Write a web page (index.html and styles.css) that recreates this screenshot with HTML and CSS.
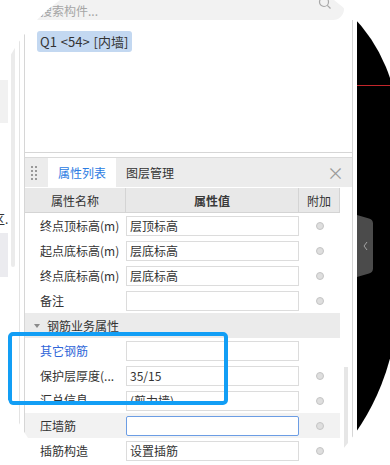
FILE: index.html
```html
<!DOCTYPE html>
<html lang="zh-CN">
<head>
    <meta charset="UTF-8">
    <meta name="viewport" content="width=device-width, initial-scale=1.0">
    <title>属性列表</title>
    <link rel="stylesheet" href="styles.css">
</head>
<body>
    <div class="stage">
        <div class="lens">
            <div class="screen">
                <div class="side">
                    <div class="side-list">
                        <div class="side-sel"></div>
                        <div class="side-text">区.</div>
                        <div class="side-block"></div>
                    </div>
                    <div class="side-scroll"></div>
                </div>

                <div class="main">
                    <div class="search">
                        <span class="search-text">搜索构件...</span>
                        <svg class="search-icon" width="14" height="14" viewBox="0 0 14 14">
                            <circle cx="6" cy="6" r="4.5" fill="none" stroke="#a8a8a8" stroke-width="1.2"/>
                            <line x1="9.3" y1="9.3" x2="12.5" y2="12.5" stroke="#a8a8a8" stroke-width="1.2"/>
                        </svg>
                    </div>

                    <div class="panel">
                        <div class="comp-list">
                            <span class="comp-item">Q1 &lt;54&gt; [内墙]</span>
                        </div>

                        <div class="tabs">
                            <div class="handle">
                                <i></i><i></i><i></i><i></i><i></i><i></i><i></i><i></i>
                            </div>
                            <div class="tab active">属性列表</div>
                            <div class="tab">图层管理</div>
                            <div class="tab-close">×</div>
                        </div>

                        <div class="props">
                            <div class="grid">
                                <div class="row head">
                                    <div class="cell">属性名称</div>
                                    <div class="cell strong">属性值</div>
                                    <div class="cell">附加</div>
                                </div>
                                <div class="row">
                                    <div class="label">终点顶标高(m)</div>
                                    <div class="val">层顶标高</div>
                                    <div class="add"><span class="radio"></span></div>
                                </div>
                                <div class="row">
                                    <div class="label">起点底标高(m)</div>
                                    <div class="val">层底标高</div>
                                    <div class="add"><span class="radio"></span></div>
                                </div>
                                <div class="row">
                                    <div class="label">终点底标高(m)</div>
                                    <div class="val">层底标高</div>
                                    <div class="add"><span class="radio"></span></div>
                                </div>
                                <div class="row">
                                    <div class="label">备注</div>
                                    <div class="val"></div>
                                    <div class="add"><span class="radio"></span></div>
                                </div>
                                <div class="group"><span class="caret"></span>钢筋业务属性</div>
                                <div class="row">
                                    <div class="label link">其它钢筋</div>
                                    <div class="val"></div>
                                    <div class="add"></div>
                                </div>
                                <div class="row">
                                    <div class="label">保护层厚度(...</div>
                                    <div class="val">35/15</div>
                                    <div class="add"><span class="radio"></span></div>
                                </div>
                                <div class="row cut">
                                    <div class="label"><span>汇总信息</span></div>
                                    <div class="val"><span>(剪力墙)</span></div>
                                    <div class="add"><span class="radio"></span></div>
                                </div>
                                <div class="row hover">
                                    <div class="label">压墙筋</div>
                                    <div class="val focus"></div>
                                    <div class="add"><span class="radio"></span></div>
                                </div>
                                <div class="row">
                                    <div class="label">插筋构造</div>
                                    <div class="val">设置插筋</div>
                                    <div class="add"><span class="radio"></span></div>
                                </div>
                                <div class="row">
                                    <div class="label"></div>
                                    <div class="val"></div>
                                    <div class="add"><span class="radio"></span></div>
                                </div>
                            </div>
                            <div class="vscroll"><div class="thumb"></div></div>
                        </div>
                    </div>
                </div>

                <div class="canvas">
                    <div class="red-line top"></div>
                    <svg class="fold" width="16" height="62" viewBox="0 0 16 62">
                        <path d="M0 0 L12 3.5 Q16 4.5 16 8.5 L16 53.5 Q16 57.5 12 58.5 L0 62 Z" fill="#4b4b4b"/>
                        <polyline points="10,27 7,31 10,35" fill="none" stroke="#a3a3a3" stroke-width="1"/>
                    </svg>
                    <div class="red-line bottom"></div>
                </div>

                <div class="mark"></div>
            </div>
        </div>
    </div>
</body>
</html>
```

FILE: styles.css
```css
body {
    margin: 0;
    background-color: #fff;
    font-family: 'Noto Sans CJK SC', 'Noto Sans', sans-serif;
    font-size: 12px;
    color: #333;
}
.stage {
    position: relative;
    width: 390px;
    height: 465px;
    overflow: hidden;
    background-color: #fff;
}
/* the magnifier: outside of it is plain white */
.lens {
    position: absolute;
    left: -12px;
    top: -32px;
    width: 410px;
    height: 559px;
    padding: 32px 0 0 12px;
    box-sizing: border-box;
    overflow: hidden;
    background-color: #fff;
    border-radius: 172px 160px 220px 190px / 172px 160px 230px 230px;
}
.screen {
    position: relative;
    display: flex;
    height: 100%;
}

/* left panel that peeks in */
.side {
    display: flex;
    width: 20px;
    margin-right: 4px;
    box-sizing: border-box;
    border-right: 1px solid #e3e3e3;
}
.side-list {
    display: flex;
    flex-direction: column;
    width: 8px;
    margin-right: 3px;
}
.side-sel {
    margin-top: 80px;
    height: 43px;
    background-color: #f1f1f1;
}
.side-text {
    margin-top: 89px;
    margin-left: -7px;
    height: 14px;
    line-height: 14px;
    white-space: nowrap;
}
.side-block {
    margin-top: 7px;
    height: 44px;
    background-color: #ebebef;
}
.side-scroll {
    margin-top: 43px;
    width: 4px;
    height: 224px;
    border-radius: 2px;
    background-color: #ebebeb;
}

.main {
    display: flex;
    flex-direction: column;
    width: 329px;
}
.search {
    display: flex;
    align-items: center;
    height: 20px;
    margin: 0 9px 0 10px;
    padding-left: 6px;
    background-color: #f2f2f2;
    border-radius: 0 10px 12px 0;
}
.search-text {
    color: #a5a5a5;
    flex: 1;
}
.search-icon {
    margin: -15px 12px 0 0;
}

.panel {
    flex: 1;
    border-left: 1px solid #d6d6d6;
    border-right: 1px solid #d6d6d6;
}
.comp-list {
    height: 133px;
    box-sizing: border-box;
    padding: 11px 12px;
    border-bottom: 1px solid #d6d6d6;
}
.comp-item {
    display: inline-block;
    height: 21px;
    line-height: 21px;
    padding: 0 4px 0 3px;
    border-radius: 3px;
    background-color: #c3d8f1;
    color: #333;
    font-size: 13px;
    word-spacing: 1px;
}

.tabs {
    display: flex;
    align-items: stretch;
    height: 30px;
    margin-top: 4px;
    box-sizing: border-box;
    border-top: 1px solid #dadada;
    background-color: #ececec;
}
.handle {
    display: grid;
    grid-template-columns: 2px 2px;
    grid-auto-rows: 2px;
    gap: 2px;
    align-content: center;
    width: 6px;
    margin-left: 6px;
}
.handle i {
    background-color: #999;
}
.tab {
    display: flex;
    align-items: center;
    padding: 0 10px;
    font-size: 12px;
    color: #333;
}
.tab.active {
    justify-content: center;
    width: 68px;
    padding: 0;
    margin-left: 11px;
    background-color: #fff;
    color: #2b7be2;
}
.tab-close {
    display: flex;
    align-items: center;
    margin-left: auto;
    margin-right: 8px;
    font-size: 17px;
    color: #9a9a9a;
}

.props {
    display: flex;
}
.grid {
    width: 315px;
}
.vscroll {
    flex: 1;
}
.thumb {
    width: 4px;
    height: 83px;
    margin: 180px 0 0 4px;
    background-color: #e6e6e6;
}
.row {
    display: grid;
    grid-template-columns: 101px 173px 41px;
    align-items: center;
    height: 25px;
}
.row.head {
    height: 25px;
    margin-top: 1px;
    box-sizing: border-box;
    border-bottom: 1px solid #d4d4d4;
    align-items: stretch;
}
.head .cell {
    display: flex;
    align-items: center;
    justify-content: center;
    background-color: #e8e8e8;
    border-right: 1px solid #d4d4d4;
    color: #333;
}
.head .strong {
    font-weight: bold;
    color: #3a3a3a;
}
.label {
    padding-left: 15px;
    white-space: nowrap;
    overflow: hidden;
}
.label.link {
    color: #2f66d8;
}
.val {
    height: 20px;
    line-height: 18px;
    padding-left: 3px;
    box-sizing: border-box;
    border: 1px solid #dcdcdc;
    background-color: #fff;
    white-space: nowrap;
}
.val.focus {
    border-color: #6c9de4;
    border-radius: 2px;
}
.add {
    display: flex;
    justify-content: center;
}
.radio {
    width: 6px;
    height: 6px;
    border: 1px solid #c4c4c4;
    border-radius: 50%;
    background-color: #dedede;
}
/* row half hidden behind the frame, as in the capture */
.row.cut .label {
    align-self: start;
}
.row.cut .label span {
    display: block;
    height: 13px;
    line-height: 24px;
    overflow: hidden;
}
.row.cut .val span {
    display: block;
    height: 11px;
    overflow: hidden;
}
.row.hover {
    background-color: #f2f2f2;
}
.group {
    display: flex;
    align-items: center;
    height: 25px;
    padding-left: 9px;
    background-color: #ebebeb;
}
.caret {
    width: 0;
    height: 0;
    margin-right: 7px;
    border-left: 3px solid transparent;
    border-right: 3px solid transparent;
    border-top: 4px solid #8a8a8a;
}

.canvas {
    display: flex;
    flex-direction: column;
    flex: 1;
    margin-left: 4px;
    background-color: #000;
}
.red-line {
    height: 1px;
    background-color: #c3262b;
}
.red-line.top {
    margin-top: 85px;
}
.red-line.bottom {
    margin-top: 157px;
}
.fold {
    margin-top: 129px;
}

/* blue annotation frame */
.mark {
    position: absolute;
    left: 8px;
    top: 332px;
    width: 220px;
    height: 73px;
    box-sizing: border-box;
    border: 4px solid #129ef5;
    border-radius: 5px;
}
```
